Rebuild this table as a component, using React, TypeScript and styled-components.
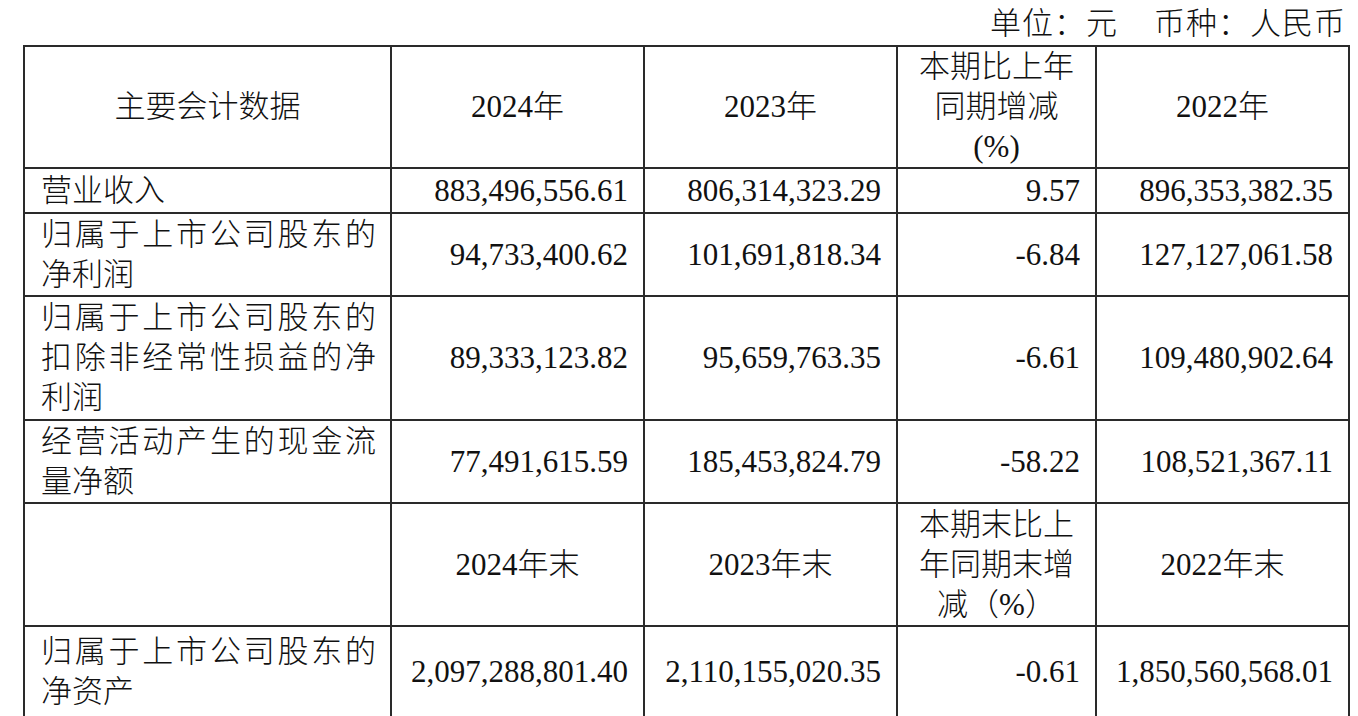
import React from "react";
import styled, { createGlobalStyle } from "styled-components";

const Global = createGlobalStyle`
  html, body { margin: 0; padding: 0; background: #fff; }
  body {
    font-family: "Liberation Serif", "Noto Sans CJK SC", serif;
    color: #111;
  }
`;

const Page = styled.div`
  width: 1358px;
  height: 716px;
  overflow: hidden;
  padding-left: 23px;
  box-sizing: border-box;
`;

const Caption = styled.div`
  width: 1324px;
  height: 45px;
  display: flex;
  justify-content: flex-end;
  align-items: center;
  gap: 36px;
  font-size: 31px;
  line-height: 40px;
  letter-spacing: 1px;
  padding-right: 1px;
  padding-top: 2px;
  box-sizing: border-box;
  font-weight: 300;
`;

const Table = styled.table`
  border-collapse: collapse;
  table-layout: fixed;
  width: 1325px;
  font-size: 31px;
  line-height: 40px;
`;

const Row = styled.tr<{ $h: number }>`
  height: ${(p) => p.$h}px;
`;

const Cell = styled.td<{ $align?: "left" | "right" | "center" }>`
  border: 2px solid #2a2a2a;
  padding: 0 15px;
  vertical-align: middle;
  text-align: ${(p) => p.$align ?? "right"};
  font-weight: 300;
  overflow: hidden;
  white-space: nowrap;
`;

const LabelCell = styled.td`
  border: 2px solid #2a2a2a;
  padding: 0 14px 0 16px;
  vertical-align: middle;
  text-align: justify;
  text-align-last: left;
  font-weight: 300;
`;

const HeadCell = styled.td`
  border: 2px solid #2a2a2a;
  padding: 0 10px;
  vertical-align: middle;
  text-align: center;
  font-weight: 300;
`;

const Lines = styled.span`
  display: block;
  white-space: pre-line;
`;

const widths = [367, 253, 253, 199, 253];

type DataRow = { label: string; values: string[]; h: number };

const rows1: DataRow[] = [
  { label: "营业收入", values: ["883,496,556.61", "806,314,323.29", "9.57", "896,353,382.35"], h: 45 },
  { label: "归属于上市公司股东的净利润", values: ["94,733,400.62", "101,691,818.34", "-6.84", "127,127,061.58"], h: 83 },
  { label: "归属于上市公司股东的扣除非经常性损益的净利润", values: ["89,333,123.82", "95,659,763.35", "-6.61", "109,480,902.64"], h: 124 },
  { label: "经营活动产生的现金流量净额", values: ["77,491,615.59", "185,453,824.79", "-58.22", "108,521,367.11"], h: 83 },
];

const rows2: DataRow[] = [
  { label: "归属于上市公司股东的净资产", values: ["2,097,288,801.40", "2,110,155,020.35", "-0.61", "1,850,560,568.01"], h: 92 },
];

const DataLine = ({ r }: { r: DataRow }) => (
  <Row $h={r.h}>
    <LabelCell>{r.label}</LabelCell>
    {r.values.map((v, i) => (
      <Cell key={i}>{v}</Cell>
    ))}
  </Row>
);

export default function App() {
  return (
    <Page>
      <Global />
      <Caption>
        <span>单位：元</span>
        <span>币种：人民币</span>
      </Caption>
      <Table>
        <colgroup>
          {widths.map((w, i) => (
            <col key={i} style={{ width: w }} />
          ))}
        </colgroup>
        <tbody>
          <Row $h={120}>
            <HeadCell>主要会计数据</HeadCell>
            <HeadCell>2024年</HeadCell>
            <HeadCell>2023年</HeadCell>
            <HeadCell>
              <Lines>{"本期比上年\n同期增减\n(%)"}</Lines>
            </HeadCell>
            <HeadCell>2022年</HeadCell>
          </Row>
          {rows1.map((r, i) => (
            <DataLine key={i} r={r} />
          ))}
          <Row $h={123}>
            <HeadCell />
            <HeadCell>2024年末</HeadCell>
            <HeadCell>2023年末</HeadCell>
            <HeadCell>
              <Lines>{"本期末比上\n年同期末增\n减（%）"}</Lines>
            </HeadCell>
            <HeadCell>2022年末</HeadCell>
          </Row>
          {rows2.map((r, i) => (
            <DataLine key={i} r={r} />
          ))}
        </tbody>
      </Table>
    </Page>
  );
}
